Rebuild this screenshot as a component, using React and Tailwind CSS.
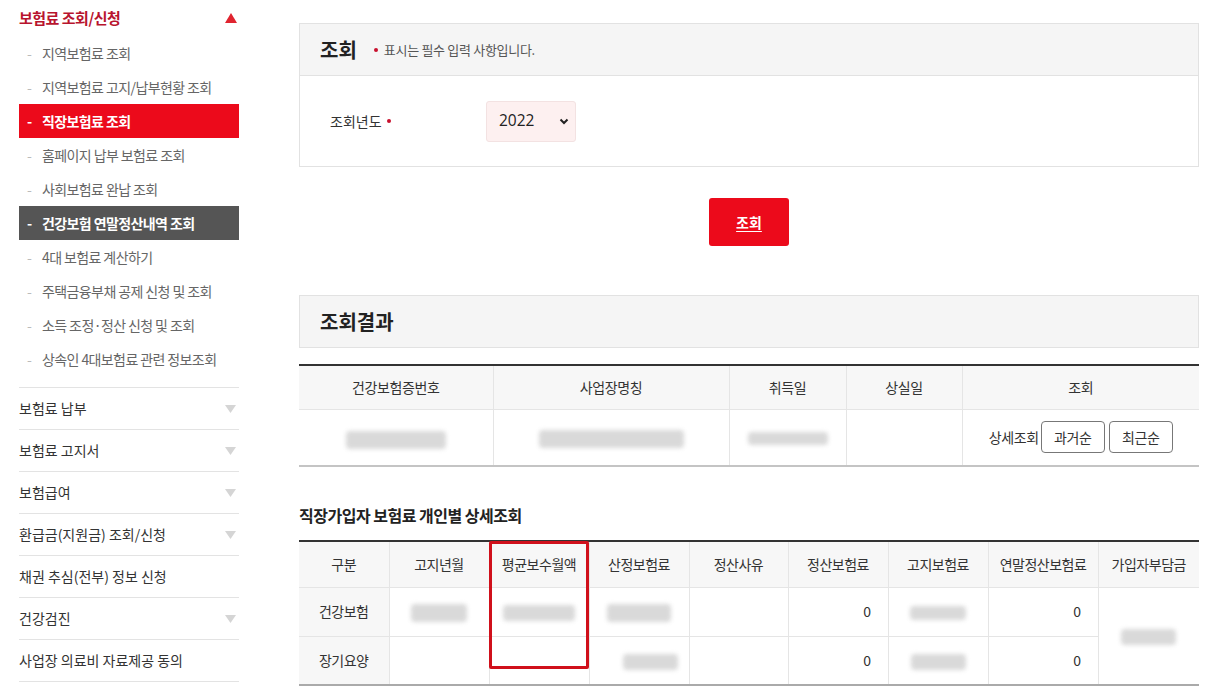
import React from 'react'

const font = { fontFamily: '"Noto Sans CJK KR", "Noto Sans", sans-serif' }

const subItems = [
  { label: '지역보험료 조회' },
  { label: '지역보험료 고지/납부현황 조회' },
  { label: '직장보험료 조회', state: 'red' },
  { label: '홈페이지 납부 보험료 조회' },
  { label: '사회보험료 완납 조회' },
  { label: '건강보험 연말정산내역 조회', state: 'dark' },
  { label: '4대 보험료 계산하기' },
  { label: '주택금융부채 공제 신청 및 조회' },
  { label: '소득 조정·정산 신청 및 조회' },
  { label: '상속인 4대보험료 관련 정보조회' },
]

const mainItems = [
  { label: '보험료 납부', arrow: true },
  { label: '보험료 고지서', arrow: true },
  { label: '보험급여', arrow: true },
  { label: '환급금(지원금) 조회/신청', arrow: true },
  { label: '채권 추심(전부) 정보 신청' },
  { label: '건강검진', arrow: true },
  { label: '사업장 의료비 자료제공 동의' },
]

const Blur = ({ w, h = 16, className = '' }) => (
  <div className={'inline-block align-middle rounded-sm bg-[#cdcdcd] blur-[2px] opacity-75 ' + className} style={{ width: w, height: h }} />
)

const Sidebar = () => {
  return <div className="w-[220px] shrink-0">
    <div className="h-[36px] flex items-center justify-between">
      <span className="text-[15px] font-bold text-[#b8142e] tracking-[-0.5px]">보험료 조회/신청</span>
      <svg width="12" height="10" viewBox="0 0 12 10" className="mr-[2px]"><path d="M6 0 L12 10 L0 10 Z" fill="#e0242f" /></svg>
    </div>
    <div className="pb-[11px] border-b border-[#e3e3e3]">
      {subItems.map((it) => {
        let cls = 'text-[#666]'
        if (it.state === 'red') cls = 'bg-[#ec0a1b] text-white font-bold'
        if (it.state === 'dark') cls = 'bg-[#555555] text-white font-bold'
        return <div key={it.label} className={'h-[34px] flex items-center text-[14px] tracking-[-0.6px] ' + cls}>
          <span className={'w-[23px] pl-[8px] ' + (it.state ? 'text-white' : 'text-[#bbb]')}>-</span>
          <span>{it.label}</span>
        </div>
      })}
    </div>
    {mainItems.map((it) => (
      <div key={it.label} className="h-[42px] flex items-center justify-between border-b border-[#e3e3e3] text-[14px] text-[#333] tracking-[0px]">
        <span>{it.label}</span>
        {it.arrow && <svg width="11" height="8" viewBox="0 0 11 8" className="mr-[3px]"><path d="M0 0 L11 0 L5.5 8 Z" fill="#d5d5d5" /></svg>}
      </div>
    ))}
  </div>
}

const SearchBox = () => {
  return <div className="border border-[#e2e2e2]">
    <div className="h-[52px] bg-[#f5f5f5] border-b border-[#e2e2e2] flex items-center pl-[20px]">
      <span className="text-[20px] font-bold text-[#222]">조회</span>
      <span className="ml-[17px] w-[4px] h-[4px] rounded-full bg-[#c8102e]" />
      <span className="ml-[6px] text-[13px] text-[#555] tracking-[-0.3px]">표시는 필수 입력 사항입니다.</span>
    </div>
    <div className="h-[90px] flex items-center pl-[30px]">
      <div className="w-[156px] flex items-center text-[14px] text-[#333]">
        조회년도<span className="ml-[5px] w-[4px] h-[4px] rounded-full bg-[#c8102e]" />
      </div>
      <div className="w-[90px] h-[41px] bg-[#fdf0f0] border border-[#f3e2e2] rounded-[3px] flex items-center justify-between pl-[12px] pr-[6px]">
        <span className="text-[15.5px] text-[#222]" style={{ fontFamily: '"Open Sans", sans-serif' }}>2022</span>
        <svg width="10" height="7" viewBox="0 0 10 7"><path d="M1.5 1.5 L5 5 L8.5 1.5" stroke="#222" strokeWidth="2" fill="none" /></svg>
      </div>
    </div>
  </div>
}

const th = 'bg-[#f7f7f7] font-normal text-[14px] text-[#333] border-l border-[#e5e5e5] first:border-l-0'
const td = 'border-l border-t border-[#e5e5e5] text-[14px] text-[#333]'

const ResultTable = () => {
  return <table className="w-full border-collapse mt-[16px] border-t-2 border-t-[#333] border-b-2 border-b-[#c4c4c4] tracking-[-0.4px]">
    <colgroup>
      <col style={{ width: 194 }} /><col style={{ width: 236 }} /><col style={{ width: 117 }} /><col style={{ width: 116 }} /><col style={{ width: 237 }} />
    </colgroup>
    <thead>
      <tr className="h-[44px]">
        <th className={th}>건강보험증번호</th>
        <th className={th}>사업장명칭</th>
        <th className={th}>취득일</th>
        <th className={th}>상실일</th>
        <th className={th}>조회</th>
      </tr>
    </thead>
    <tbody>
      <tr className="h-[57px] text-center">
        <td className="border-t border-[#e5e5e5]"><Blur w={100} h={18} /></td>
        <td className={td}><Blur w={145} h={18} /></td>
        <td className={td}><Blur w={80} h={13} /></td>
        <td className={td}></td>
        <td className={td}>
          <div className="flex items-center justify-center gap-[4px]">
            <span className="mr-[-2px]">상세조회</span>
            <span className="w-[64px] h-[32px] border border-[#777] rounded-[4px] flex items-center justify-center">과거순</span>
            <span className="w-[64px] h-[32px] border border-[#777] rounded-[4px] flex items-center justify-center">최근순</span>
          </div>
        </td>
      </tr>
    </tbody>
  </table>
}

const DetailTable = () => {
  const heads = ['구분', '고지년월', '평균보수월액', '산정보험료', '정산사유', '정산보험료', '고지보험료', '연말정산보험료', '가입자부담금']
  const widths = [90, 100, 100, 100, 99, 100, 100, 110, 101]
  return <div className="relative mt-[15px]">
    <table className="w-full border-collapse border-t-2 border-t-[#333] border-b-2 border-b-[#aaa] tracking-[-0.5px]">
      <colgroup>{widths.map((w, i) => <col key={i} style={{ width: w }} />)}</colgroup>
      <thead>
        <tr className="h-[46px]">
          {heads.map((h) => <th key={h} className={th}>{h}</th>)}
        </tr>
      </thead>
      <tbody>
        <tr className="h-[49px] text-center">
          <td className="border-t border-[#e5e5e5] bg-[#f7f7f7] text-[14px] text-[#333]">건강보험</td>
          <td className={td}><Blur w={56} h={18} /></td>
          <td className={td}><Blur w={72} h={16} /></td>
          <td className={td}><Blur w={64} h={18} /></td>
          <td className={td}></td>
          <td className={td + ' text-right pr-[17px]'}>0</td>
          <td className={td}><Blur w={56} h={14} /></td>
          <td className={td + ' text-right pr-[17px]'}>0</td>
          <td rowSpan={2} className={td}><Blur w={55} h={16} /></td>
        </tr>
        <tr className="h-[49px] text-center">
          <td className="border-t border-[#e5e5e5] bg-[#f7f7f7] text-[14px] text-[#333]">장기요양</td>
          <td className={td}></td>
          <td className={td}></td>
          <td className={td}><Blur w={55} h={16} className="ml-[22px]" /></td>
          <td className={td}></td>
          <td className={td + ' text-right pr-[17px]'}>0</td>
          <td className={td}><Blur w={55} h={16} /></td>
          <td className={td + ' text-right pr-[17px]'}>0</td>
        </tr>
      </tbody>
    </table>
    <div className="absolute left-[190px] top-[1px] w-[100px] h-[128px] border-[3px] border-[#d0101b] rounded-[2px]" />
  </div>
}

export default function App() {
  return <div className="flex bg-white w-[1214px] h-[689px] overflow-hidden" style={font}>
    <div className="pl-[19px]">
      <Sidebar />
    </div>
    <div className="ml-[60px] w-[900px] pt-[23px]">
      <SearchBox />
      <div className="flex justify-center mt-[31px]">
        <button className="w-[80px] h-[48px] bg-[#ec0a1b] rounded-[3px] text-white font-bold text-[14px] underline underline-offset-[3px]">조회</button>
      </div>
      <div className="mt-[49px] h-[53px] bg-[#f5f5f5] border border-[#e2e2e2] flex items-center pl-[20px]">
        <span className="text-[20px] font-bold text-[#222]">조회결과</span>
      </div>
      <ResultTable />
      <div className="mt-[38px] text-[16px] font-bold text-[#222] tracking-[-0.5px] leading-[20px]">직장가입자 보험료 개인별 상세조회</div>
      <DetailTable />
    </div>
  </div>
}
